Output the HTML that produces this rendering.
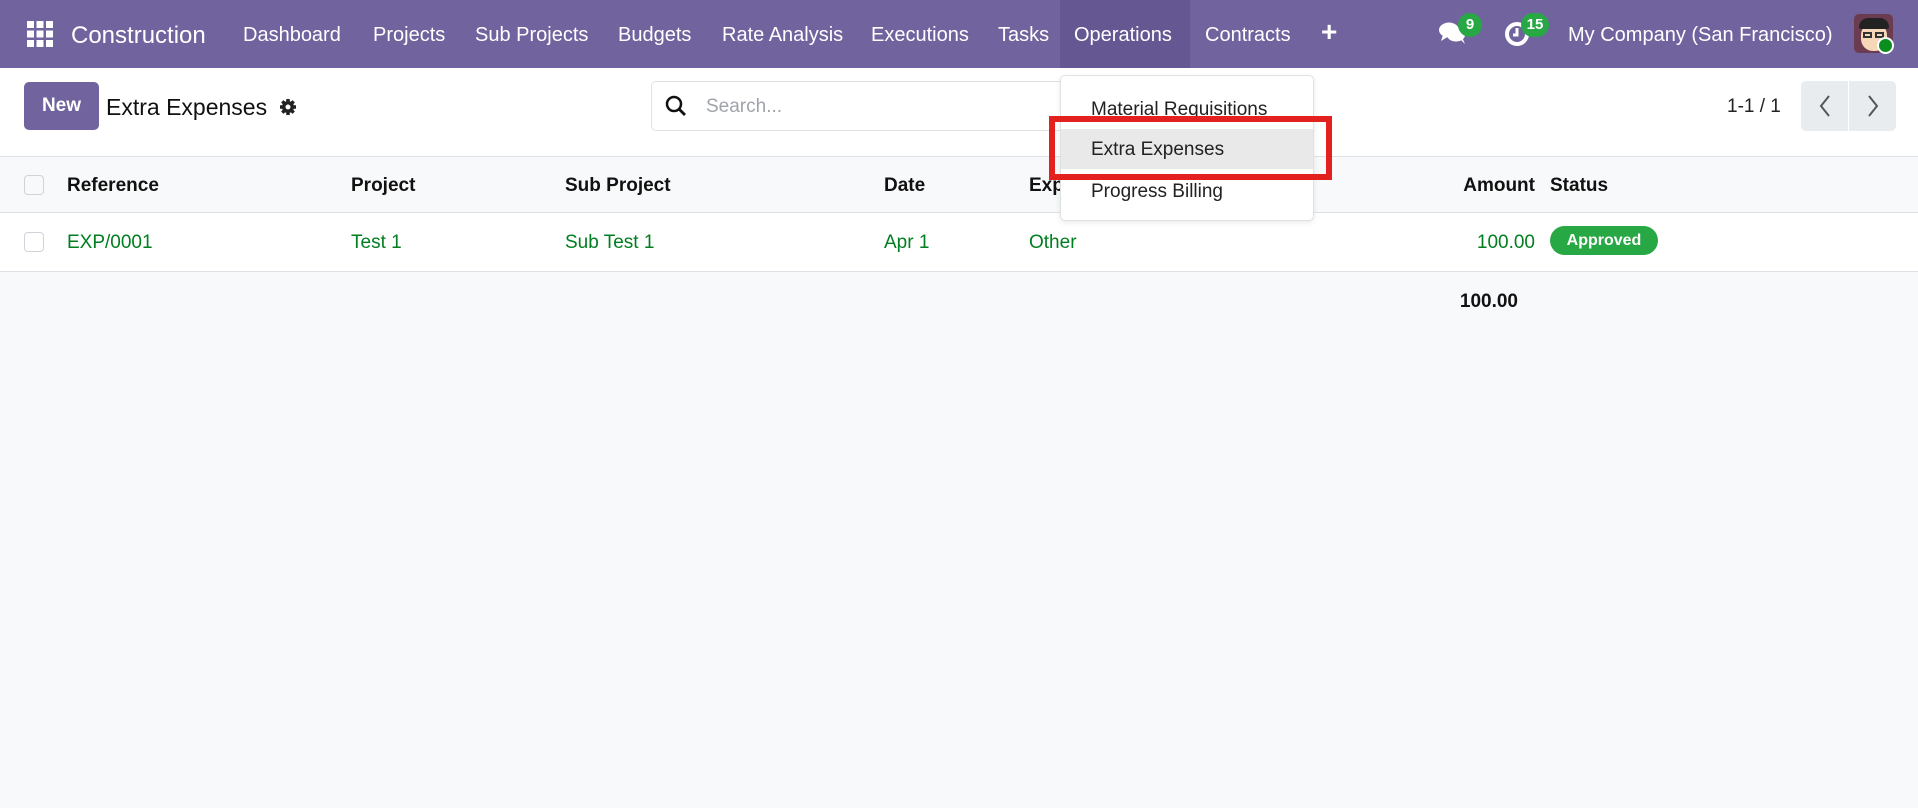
<!DOCTYPE html>
<html><head><meta charset="utf-8"><style>
*{margin:0;padding:0;box-sizing:border-box}
body{width:1918px;height:808px;overflow:hidden;background:#f8f9fa;font-family:"Liberation Sans",sans-serif;color:#111;position:relative}
.nav{position:absolute;left:0;top:0;width:1918px;height:68px;background:#71639e;color:#fff}
.nav span{position:absolute;top:24px;font-size:20px;white-space:nowrap}
.ab{position:absolute}
.cp{position:absolute;left:0;top:68px;width:1918px;height:89px;background:#fff;border-bottom:1px solid #dee2e6}
.th{position:absolute;left:0;top:157px;width:1918px;height:56px;background:#f8f9fa;border-bottom:1px solid #dee2e6}
.tr{position:absolute;left:0;top:213px;width:1918px;height:59px;background:#fff;border-bottom:1px solid #dee2e6}
.th span{position:absolute;top:18px;font-weight:bold;font-size:19px}
.tr span{position:absolute;top:19px;font-size:19px;color:#017e1f}
.cb{position:absolute;left:24px;width:20px;height:20px;border:1px solid #ced4da;border-radius:4px;background:#fff}
.badge{position:absolute;background:#28a745;color:#fff;font-weight:bold;border-radius:10px;text-align:center}
</style></head><body>
<div class="nav">
  <svg class="ab" style="left:27px;top:21px" width="26" height="26" viewBox="0 0 26 26" fill="#fff">
    <rect x="0" y="0" width="7" height="7"/><rect x="9.5" y="0" width="7" height="7"/><rect x="19" y="0" width="7" height="7"/>
    <rect x="0" y="9.5" width="7" height="7"/><rect x="9.5" y="9.5" width="7" height="7"/><rect x="19" y="9.5" width="7" height="7"/>
    <rect x="0" y="19" width="7" height="7"/><rect x="9.5" y="19" width="7" height="7"/><rect x="19" y="19" width="7" height="7"/>
  </svg>
  <span style="left:71px;top:22px;font-size:24px">Construction</span>
  <span style="left:243px">Dashboard</span>
  <span style="left:373px">Projects</span>
  <span style="left:475px">Sub Projects</span>
  <span style="left:618px">Budgets</span>
  <span style="left:722px">Rate Analysis</span>
  <span style="left:871px">Executions</span>
  <span style="left:998px">Tasks</span>
  <div class="ab" style="left:1060px;top:0;width:130px;height:68px;background:#655892"></div>
  <span style="left:1074px">Operations</span>
  <span style="left:1205px">Contracts</span>
  <span style="left:1321px;top:16px;font-size:28px;font-weight:bold">+</span>
  <svg class="ab" style="left:1438px;top:20px" width="30" height="26" viewBox="0 0 30 26" fill="#fff"><ellipse cx="11" cy="10" rx="10" ry="7.5"/><path d="M5 15 L3 21 L11 16Z"/><ellipse cx="18" cy="15" rx="9" ry="6.5"/><path d="M22 19 L27 24 L24 17Z"/></svg>
  <div class="badge" style="left:1458px;top:13px;width:24px;height:24px;font-size:15px;line-height:24px;border-radius:12px">9</div>
  <svg class="ab" style="left:1504px;top:20px" width="28" height="28" viewBox="0 0 28 28"><circle cx="13" cy="14" r="10" fill="none" stroke="#fff" stroke-width="4"/><path d="M13 8 V15 H9" stroke="#fff" stroke-width="3" fill="none"/></svg>
  <div class="badge" style="left:1521px;top:13px;width:28px;height:24px;font-size:15px;line-height:24px;border-radius:12px">15</div>
  <span style="left:1568px">My Company (San Francisco)</span>
  <div class="ab" style="left:1854px;top:14px;width:39px;height:39px;background:#6b3c4f;border-radius:5px;overflow:hidden">
    <div class="ab" style="left:7px;top:9px;width:26px;height:28px;background:#f6d7b8;border-radius:12px"></div>
    <div class="ab" style="left:5px;top:4px;width:30px;height:11px;background:#222;border-radius:10px 10px 2px 2px"></div>
    <div class="ab" style="left:9px;top:18px;width:9px;height:6px;border:2px solid #333"></div>
    <div class="ab" style="left:21px;top:18px;width:9px;height:6px;border:2px solid #333"></div>
  </div>
  <div class="ab" style="left:1877px;top:37px;width:17px;height:17px;border-radius:50%;background:#0a8f1f;border:2px solid #fff"></div>
</div>
<div class="cp">
  <div class="ab" style="left:24px;top:14px;width:75px;height:48px;background:#71639e;border-radius:5px;color:#fff;font-weight:bold;font-size:19px;line-height:48px;text-align:center">New</div>
  <div class="ab" style="left:106px;top:26px;font-size:23px;color:#111">Extra Expenses</div>
  <svg class="ab" style="left:279px;top:30px" width="18" height="18" viewBox="0 0 18 18"><circle cx="9" cy="9" r="6" fill="#222"/><g stroke="#222" stroke-width="3.5"><path d="M9 1V17M1 9H17M3.3 3.3L14.7 14.7M14.7 3.3L3.3 14.7"/></g><circle cx="9" cy="9" r="2.5" fill="#fff"/></svg>
  <div class="ab" style="left:651px;top:13px;width:660px;height:50px;border:1px solid #dee2e6;border-radius:5px;background:#fff"></div>
  <svg class="ab" style="left:665px;top:27px" width="22" height="22" viewBox="0 0 22 22"><circle cx="9" cy="9" r="7" stroke="#111" stroke-width="2.5" fill="none"/><path d="M14 14L20 20" stroke="#111" stroke-width="2.8"/></svg>
  <div class="ab" style="left:706px;top:28px;font-size:19px;color:#a0a4aa">Search...</div>
  <div class="ab" style="left:1727px;top:28px;font-size:19px;color:#222">1-1 / 1</div>
  <div class="ab" style="left:1801px;top:13px;width:95px;height:50px;background:#e9ecef;border-radius:5px"></div>
  <div class="ab" style="left:1848px;top:13px;width:1px;height:50px;background:#fff"></div>
  <svg class="ab" style="left:1816px;top:26px" width="18" height="24" viewBox="0 0 18 24"><path d="M13 2L5 12L13 22" stroke="#555" stroke-width="2" fill="none"/></svg>
  <svg class="ab" style="left:1864px;top:26px" width="18" height="24" viewBox="0 0 18 24"><path d="M5 2L13 12L5 22" stroke="#555" stroke-width="2" fill="none"/></svg>
</div>
<div class="th">
  <div class="cb" style="top:18px;background:#f8f9fa"></div>
  <span style="left:67px">Reference</span>
  <span style="left:351px">Project</span>
  <span style="left:565px">Sub Project</span>
  <span style="left:884px">Date</span>
  <span style="left:1029px">Exp</span>
  <span style="left:1458px;width:77px;text-align:right">Amount</span>
  <span style="left:1550px">Status</span>
</div>
<div class="tr">
  <div class="cb" style="top:19px"></div>
  <span style="left:67px">EXP/0001</span>
  <span style="left:351px">Test 1</span>
  <span style="left:565px">Sub Test 1</span>
  <span style="left:884px">Apr 1</span>
  <span style="left:1029px">Other</span>
  <span style="left:1435px;width:100px;text-align:right">100.00</span>
  <div class="badge" style="left:1550px;top:13px;width:108px;height:29px;line-height:29px;font-size:16px;border-radius:15px">Approved</div>
</div>
<div class="ab" style="left:1418px;top:291px;width:100px;text-align:right;font-weight:bold;font-size:19px">100.00</div>
<div class="ab" style="left:1060px;top:75px;width:254px;height:146px;background:#fff;border:1px solid #dee2e6;border-radius:5px;box-shadow:0 2px 6px rgba(0,0,0,.08)">
  <div class="ab" style="left:30px;top:23px;font-size:19px;color:#222;white-space:nowrap">Material Requisitions</div>
  <div class="ab" style="left:0;top:53px;width:252px;height:40px;background:#e9e9e9"></div>
  <div class="ab" style="left:30px;top:63px;font-size:19px;color:#222">Extra Expenses</div>
  <div class="ab" style="left:30px;top:105px;font-size:19px;color:#222">Progress Billing</div>
</div>
<div class="ab" style="left:1049px;top:116px;width:283px;height:64px;border:6px solid #e3211f"></div>
</body></html>
